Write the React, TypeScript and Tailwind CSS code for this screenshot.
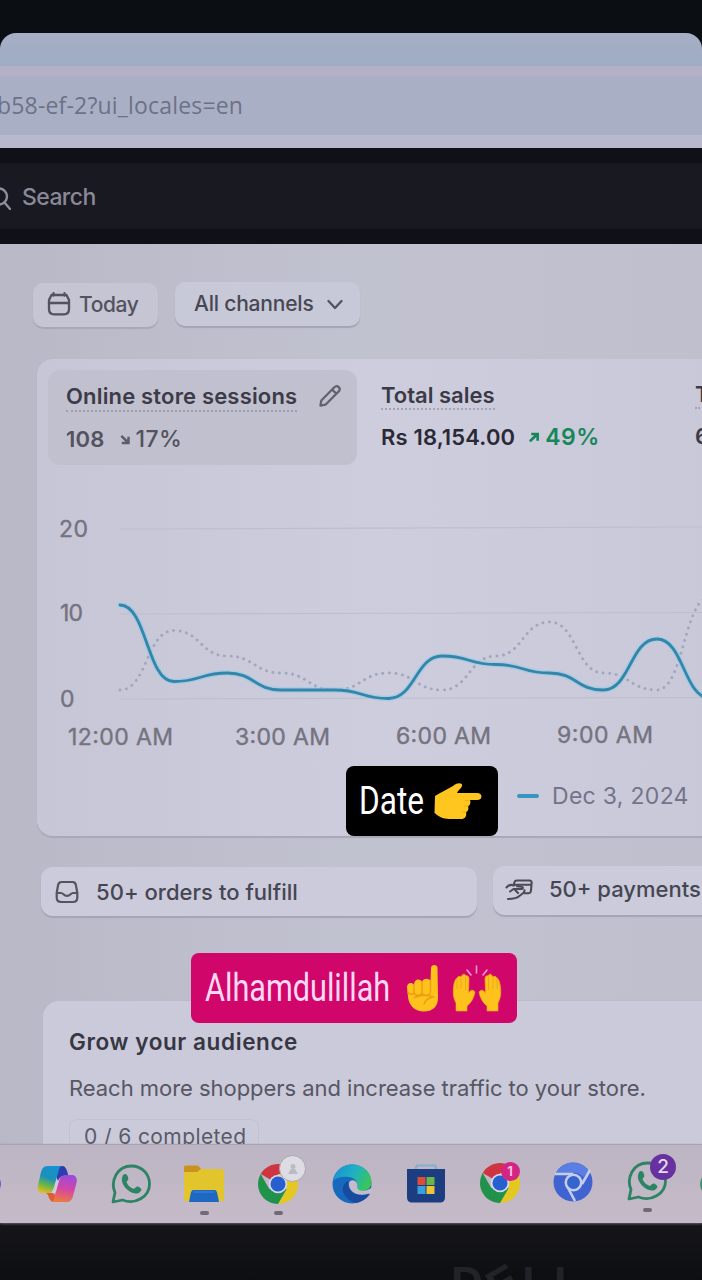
import React from "react";

const STEP = 53.7;
const solid = [11, 2, 3, 1, 1, 0, 5, 4, 3, 1, 7, 0];
const dotted = [1, 8, 5, 3, 1, 3, 1, 5, 9, 3, 1, 12];

function curve(values: number[]) {
  const pts = values.map((v, i) => [120 + i * STEP, 208.5 - v * 8.5]);
  return pts.reduce((d, [x, y], i) => {
    if (i === 0) return `M${x} ${y}`;
    const [px, py] = pts[i - 1];
    const mid = (px + x) / 2;
    return `${d} C${mid} ${py} ${mid} ${y} ${x} ${y}`;
  }, "");
}

function Chart() {
  return (
    <svg className="absolute -left-[37px] top-[131px] h-[270px] w-[702px] font-['Inter',sans-serif]" viewBox="0 0 702 270">
      <g stroke="#bfbecd" strokeWidth="1.200">
        <path d="M119 39L702 37" />
        <path d="M119 124L702 122.500" />
        <path d="M119 209L702 207.500" />
      </g>
      <path d={curve(dotted)} fill="none" stroke="#a0a8c0" strokeWidth="2.900" strokeLinecap="round" strokeDasharray="0.1 6.4" />
      <path d={curve(solid)} fill="none" stroke="#8fcbe6" strokeWidth="5.500" strokeLinecap="round" opacity=".6" />
      <path d={curve(solid)} fill="none" stroke="#3485aa" strokeWidth="2.800" strokeLinecap="round" />
      <g fill="#74737f" stroke="#74737f" strokeWidth=".4" fontSize="23">
        <text x="59" y="46.500" textLength="29">20</text>
        <text x="60" y="130.500" textLength="23">10</text>
        <text x="60" y="216.500">0</text>
        <text x="68" y="254.500" textLength="105">12:00 AM</text>
        <text x="235" y="254.500" textLength="95">3:00 AM</text>
        <text x="396" y="253.500" textLength="95">6:00 AM</text>
        <text x="557" y="252.500" textLength="96">9:00 AM</text>
      </g>
    </svg>
  );
}

function CalendarIcon() {
  return (
    <svg className="-mt-[2px] h-6 w-6" viewBox="0 0 24 24" fill="none" stroke="#53525e" strokeWidth="2.300" strokeLinecap="round">
      <path d="M4.500 3H19.500L22 8V17C22 20.500 20 22.300 17 22.300H7C4 22.300 2 20.500 2 17V8Z" strokeLinejoin="round" />
      <path d="M2 11H22M6.500 1.200V3.500M17.500 1.200V3.500" />
    </svg>
  );
}

function PencilIcon() {
  return (
    <svg className="h-6 w-6" viewBox="0 0 24 24" fill="none" stroke="#62626e" strokeWidth="2.200" strokeLinejoin="round">
      <path d="M2.400 21.600L3.300 16.500L16.300 3.300C17.700 1.900 19.500 1.900 20.700 3.100C22 4.400 22 6.100 20.700 7.400L7.500 20.700Z" />
      <path d="M14.200 5.600L18.400 9.800" />
    </svg>
  );
}

function TrendIcon({ up }: { up?: boolean }) {
  return up ? (
    <svg className="h-[11px] w-3" viewBox="0 0 12 12" fill="none" stroke="#16875a" strokeWidth="2.900">
      <path d="M1.500 10L9 3M3 2.200H10V9.500" />
    </svg>
  ) : (
    <svg className="h-[11px] w-3" viewBox="0 0 12 12" fill="none" stroke="#5d5c69" strokeWidth="2.700">
      <path d="M2 2L9 9M2.500 9.800H9.800V3" />
    </svg>
  );
}

function InboxIcon() {
  return (
    <svg className="h-6 w-6" viewBox="0 0 24 24" fill="none" stroke="#55555f" strokeWidth="2.200" strokeLinejoin="round">
      <path d="M6.500 2H17.500C20 2 20.700 3 21 5.500L22.300 13V17.500C22.300 20.500 20.800 22 18 22H6C3.200 22 1.700 20.500 1.700 17.500V13L3 5.500C3.400 3 4.200 2 6.500 2Z" />
      <path d="M1.800 13H6C8.500 13 8.500 15.800 12 15.800C15.500 15.800 15.500 13 18 13H22.200" />
    </svg>
  );
}

function PaymentIcon() {
  return (
    <svg className="h-[22px] w-7" viewBox="0 0 28 22" fill="none" stroke="#4b4b57" strokeWidth="2.100" strokeLinecap="round" strokeLinejoin="round">
      <path d="M9 4.500L9.500 3C9.800 1.800 10.500 1.500 12 1.500H24.500C26 1.500 26.700 2.400 26.600 4L26 11.500C25.800 13.300 25 14.300 23.300 14.300H19.500" />
      <path d="M9.500 5.800H26" />
      <path d="M1.500 8.500C4 5.500 6 5 9 6.500M5 12.500L8.500 10H16.500C18.500 10 18.500 8 16.500 7.800L12 7.200" />
      <path d="M19.500 11.300C20 13.500 17.500 14.500 15 16.500C12 19.500 9 20 3 20M9.500 10.300L13 14" />
    </svg>
  );
}

function PointRight() {
  return (
    <svg className="h-[38px] w-[49px]" viewBox="0 0 49 38">
      <path d="M2 14C8 10 15 7 20 4C25 0 30 1 29 4C28 7 25 8 24 11H44C50 11 50 18 44 18H37C38 20 37 24 35 24C36 27 35 30 33 30C34 34 32 37 28 37H16C10 37 5 34 1.500 31Z" fill="#fec61e" />
      <path d="M36 18.500H32M35 24H31M33 30H29" stroke="#eeae1d" strokeWidth="1" fill="none" strokeLinecap="round" />
    </svg>
  );
}

function PointUp() {
  return (
    <svg className="h-12 w-[34px]" viewBox="0 0 34 48">
      <path d="M25 4C25 0 31.500 0 31.500 4L32 34C32 43 26 47.500 18 47.500C8 47.500 3 41 2 33L1 23C1 19 6 17.500 8 21C8 15 14 14 16 18C17 14 23 14 24.500 17Z" fill="#fec21d" />
      <path d="M8 21V28C8 31 3 31 2 28M16 18V28C16 32 9 32 8 29M24.500 17V28C24 32 17 32 16 29M8 34C14 30 23 31 27 33C22 34 19 37 18 40" fill="none" stroke="#ed9d14" strokeWidth="1.400" strokeLinecap="round" />
    </svg>
  );
}

function RaisedHands() {
  const hand = "M4 47L4 39C1 34 1 28 1.500 23C2 19 3 15 5 14C6 12 8 12 9 13C10 10 13 9 14 12C16 11 17 13 17 15L16.500 29C18 26 21 25 23 28C22 34 19 39 15 42V47Z";
  return (
    <svg className="h-[49px] w-[50px]" viewBox="0 0 50 49">
      <g fill="#fec21d" stroke="#f3a818" strokeWidth=".6">
        <path d={hand} />
        <path d={hand} transform="translate(50 0) scale(-1 1)" />
      </g>
      <path d="M5 15V25M9 14V25M13.500 13V26M45 15V25M41 14V25M36.500 13V26" fill="none" stroke="#f0a31a" strokeWidth=".9" />
      <path d="M15 6L19 11M24.500 2V9M35 6L31 11" stroke="#ef9bd2" strokeWidth="1.600" strokeLinecap="round" />
    </svg>
  );
}

function Copilot() {
  return (
    <svg className="h-10 w-10" viewBox="0 0 40 40">
      <defs>
        <linearGradient id="cpA" x1=".6" y1="0" x2=".3" y2="1">
          <stop offset="0" stopColor="#1590d2" />
          <stop offset=".45" stopColor="#1d91b8" />
          <stop offset=".72" stopColor="#69b548" />
          <stop offset="1" stopColor="#e0bc22" />
        </linearGradient>
        <linearGradient id="cpB" x1=".6" y1="0" x2=".4" y2="1">
          <stop offset="0" stopColor="#9a4bd8" />
          <stop offset=".5" stopColor="#d345a8" />
          <stop offset="1" stopColor="#ef7a3c" />
        </linearGradient>
      </defs>
      <path d="M15 5H26L24 26L15 30Z" fill="#d4cae0" />
      <path d="M19 2H25C28 2 29 4 30 7L31.500 12H27C24 12 22 14 21 17L19 12Z" fill="#2d3db0" />
      <path d="M10 2H25C22 3 22 6 21 9L17 23C16 27 14 29 11 29H6C1 29 0 26 1 21L4 8C5 4 7 2 10 2Z" fill="url(#cpA)" />
      <path d="M9 29H16L20 33L16 38C13 37 12 34 11 31Z" fill="#dd5f31" />
      <path d="M28 11H34C39 11 40.500 14 39.500 19L36 32C35 36 33 38 29 38H14C17 37 17 34 18 31L22 17C23 13 25 11 28 11Z" fill="url(#cpB)" />
    </svg>
  );
}

function WhatsApp() {
  return (
    <svg className="h-10 w-10" viewBox="0 0 40 40">
      <path d="M2 38L4 28.500C-1 17 6 2 20.500 2C31 2 38.500 10 38.500 20C38.500 33 24 41 11.500 36Z" fill="none" stroke="#2c8464" strokeWidth="2.800" strokeLinejoin="round" />
      <path d="M12 11C14 9 16 10 17 13C18 16 16 17 15.500 18C17 22 20 24 23 25C25 23 26 22 28 23C31 25 31 26 29 28C26 31 21 29 18 27C14 24 10 19 11 14Z" fill="#2c8464" />
    </svg>
  );
}

function Folder() {
  return (
    <svg className="h-10 w-[42px]" viewBox="0 0 42 40">
      <path d="M1 3C1 2 2 1.500 3 1.500H15L18 5V11H1Z" fill="#c9921f" />
      <path d="M1 8H14L18 5H38C40 5 41 6 41 8V37H1Z" fill="#e2c42c" />
      <path d="M11 26H31C34 26 34 28 35 33L36 38H6L7 33C8 28 8 26 11 26Z" fill="#1f67c0" />
      <path d="M11 27H31V29H11Z" fill="#2b7ad0" />
    </svg>
  );
}

function Chrome() {
  return (
    <svg className="h-10 w-10" viewBox="0 0 40 40">
      <path d="M20 20L2.700 10A20 20 0 0 1 37.300 10Z" fill="#ce3540" />
      <path d="M37.300 10H20V20L28.700 25L20 40A20 20 0 0 0 37.300 10Z" fill="#e5c722" />
      <path d="M2.700 10L11.300 25L20 20L28.700 25L20 40A20 20 0 0 1 2.700 10Z" fill="#20924b" />
      <circle cx="20" cy="20" r="9.300" fill="#d4d5e8" />
      <circle cx="20" cy="20" r="7.500" fill="#275fd0" />
    </svg>
  );
}

function Edge() {
  return (
    <svg className="h-10 w-10" viewBox="0 0 40 40">
      <defs>
        <linearGradient id="edA" x1="0" y1=".2" x2="1" y2=".6">
          <stop offset="0" stopColor="#188fd2" />
          <stop offset=".5" stopColor="#1eb1c4" />
          <stop offset="1" stopColor="#3cc653" />
        </linearGradient>
      </defs>
      <circle cx="20" cy="20" r="19.500" fill="#1769bd" />
      <path d="M.8 17C3 6 11 .5 20 .5C31 .5 39.500 8 39.500 18C39.500 24 34 27.500 29 27.500C26 27.500 24 26 25 24C27 20 24 14 17 13C10 12 4 14 .8 17Z" fill="url(#edA)" />
      <path d="M16 17C7 22 10 35 24 39C31 38 36 33 38 30C26 34 15 29 16 17Z" fill="#184aa0" />
      <path d="M17 19C18 14 26 16 25.500 22C24 26 30 29.500 39.500 24L40 28C30 34 16 30 17 19Z" fill="#c4bccb" />
    </svg>
  );
}

function Store() {
  return (
    <svg className="h-10 w-10" viewBox="0 0 40 40">
      <path d="M9 7L11 2.500H29L31 7" fill="none" stroke="#84aed0" strokeWidth="2.200" />
      <path d="M1 6H39V34C39 38 37 39.500 34 39.500H6C3 39.500 1 38 1 34Z" fill="#1c3e80" />
      <path d="M11.500 14H19.500V22H11.500Z" fill="#dc4c38" />
      <path d="M20.500 14H28.500V22H20.500Z" fill="#6bb646" />
      <path d="M11.500 23H19.500V31H11.500Z" fill="#36a0df" />
      <path d="M20.500 23H28.500V31H20.500Z" fill="#efc534" />
    </svg>
  );
}

function BlueChromium() {
  return (
    <svg className="h-10 w-10" viewBox="0 0 40 40">
      <circle cx="20" cy="20" r="19.500" fill="#4063d2" />
      <path d="M3 11A19.500 19.500 0 0 1 36 9L30 15C27 11 23 10.500 20 11Z" fill="#5a7ee2" />
      <path d="M2 12H20M29 22L37 8M14 24L22 39" stroke="#c6cdeb" strokeWidth="2.600" />
      <circle cx="20.500" cy="20.500" r="9" fill="#c6cdeb" />
      <circle cx="20.500" cy="20.500" r="6.500" fill="#3564cd" />
    </svg>
  );
}

function TaskItem({ children, running, badge }: { children: React.ReactNode; running?: boolean; badge?: React.ReactNode }) {
  return (
    <div className="relative flex w-[73.8px] shrink-0 flex-col items-center">
      {children}
      {running && <span className="mt-[7px] h-1 w-[9px] rounded-full bg-[#706977]" />}
      {badge}
    </div>
  );
}

export default function App() {
  return (
    <div className="h-[1280px] w-[702px] overflow-hidden bg-[#0b0f14] pt-[33px] font-['Inter','Liberation_Sans',sans-serif]">
      <div className="flex h-[1247px] flex-col overflow-hidden rounded-t-[16px] bg-[#101015]">
        <div className="h-[33px] shrink-0 bg-linear-to-b from-[#a6aec4] to-[#9dadc5]" />
        <div className="flex h-[82px] shrink-0 items-center border-t-10 border-b-13 border-t-[#b4b1c6] border-b-[#b9b8cc] bg-[#a9b0c6] shadow-[0_1px_1px_#77778a]">
          <span className="relative -left-[3px] font-['Open_Sans',sans-serif] text-[23px] tracking-[0.18px] whitespace-nowrap text-[#6c7286]">b58-ef-2?ui_locales=en</span>
        </div>
        <div className="flex h-[96px] shrink-0 items-center gap-[11px] border-y-15 border-[#101018] bg-[#191a21] pt-[3px]">
          <svg className="-ml-3 h-6 w-[23px] shrink-0" viewBox="0 0 23 24" fill="none" stroke="#8e8d9b" strokeWidth="2.400" strokeLinecap="round">
            <circle cx="11" cy="10.500" r="8" />
            <path d="M16.500 16.500L22 23" />
          </svg>
          <span className="text-[23px] font-medium tracking-[-0.6px] text-[#8b8997]">Search</span>
        </div>

        <main className="h-[900px] shrink-0 overflow-hidden bg-linear-to-r from-[#b9b8c7] via-[#c1c2d0] to-[#c0bfce]">
          <div className="flex gap-[17px] pt-[38px] pl-[33px]">
            <div className="mt-px flex h-11 w-[125px] items-center gap-2 rounded-[10px] bg-[#c5c5d4] pl-[14px] shadow-[0_2px_1px_#a9a8b6]">
              <CalendarIcon />
              <span className="text-[21px] font-medium tracking-[-0.4px] text-[#53525e]">Today</span>
            </div>
            <div className="flex h-11 w-[185px] items-center gap-[13px] rounded-[10px] bg-[#c8c9d8] pl-[19px] shadow-[0_2px_1px_#a5a4b2]">
              <span className="text-[21px] font-medium tracking-[-0.2px] whitespace-nowrap text-[#484853]">All channels</span>
              <svg className="h-4 w-4" viewBox="0 0 16 16" fill="none" stroke="#53535e" strokeWidth="2.300" strokeLinecap="round" strokeLinejoin="round">
                <path d="M1.500 5L8 12L14.500 5" />
              </svg>
            </div>
          </div>

          <section className="relative mt-8 ml-[37px] h-[477px] w-[700px] rounded-[16px] bg-linear-to-r from-[#c7c6d6] via-[#cdcddd] to-[#c9c8d8] shadow-[0_2px_1px_#a9a8b7]">
            <div className="flex pt-[11px] pl-[11px]">
              <div className="h-[95px] w-[309px] shrink-0 rounded-[12px] bg-[#c0c0ce] px-[18px] pt-[12px]">
                <div className="flex items-start justify-between">
                  <h2 className="h-[30px] border-b-2 border-dotted border-[#a09fad] text-[22px] leading-[28px] font-semibold tracking-[0.17px] whitespace-nowrap text-[#3c3b48]">Online store sessions</h2>
                  <div className="mt-[2px] -mr-[3px]"><PencilIcon /></div>
                </div>
                <div className="mt-[13px] flex items-center text-[22px] leading-[28px] font-medium text-[#53525e]">
                  <span className="mr-[14px] font-semibold tracking-[0.2px]">108</span>
                  <TrendIcon />
                  <span className="ml-[5px] text-[23px] tracking-[0.4px]">17%</span>
                </div>
              </div>
              <div className="w-[314px] shrink-0 pt-[11px] pl-6">
                <h2 className="h-[29px] w-fit border-b-2 border-dotted border-[#a5a4b4] text-[22px] leading-[28px] font-semibold text-[#3b3a47]">Total sales</h2>
                <div className="mt-[13px] flex items-center text-[22px] leading-[28px] font-semibold whitespace-nowrap">
                  <span className="mr-[13px] tracking-[0.15px] text-[#2a2936]">Rs 18,154.00</span>
                  <TrendIcon up />
                  <span className="ml-[5px] text-[23px] tracking-[0.5px] text-[#16875a]">49%</span>
                </div>
              </div>
              <div className="pt-[10px] pl-6">
                <div className="h-[29px] w-10 border-b-2 border-dotted border-[#a5a4b4] text-[22px] leading-[28px] font-semibold text-[#3b3a47]">T</div>
                <div className="mt-[13px] text-[22px] leading-[28px] font-semibold text-[#3b3a47]">6</div>
              </div>
            </div>
            <Chart />
            <div className="absolute top-[407px] left-[309px] flex h-[70px] w-[152px] items-center rounded-[8px] bg-black pl-[13px]">
              <span className="inline-block w-[74px] origin-left scale-x-[.8] font-['Roboto',sans-serif] text-[39.5px] leading-none font-[450] text-white">Date</span>
              <PointRight />
            </div>
            <div className="absolute top-[420px] left-[480px] flex items-center gap-[13px]">
              <span className="h-1 w-[22px] rounded-full bg-[#3b94bd]" />
              <span className="text-[23px] tracking-[0.3px] whitespace-nowrap text-[#74738a]">Dec 3, 2024</span>
            </div>
          </section>

          <div className="mt-[30px] ml-[41px] flex w-[800px] gap-4">
            <div className="mt-px flex h-[49px] w-[436px] items-center gap-[17px] rounded-[12px] bg-[#cbcbdb] pt-px pl-[14px] shadow-[0_2px_1px_#a5a5b4]">
              <InboxIcon />
              <span className="text-[22px] font-medium tracking-[0.04px] whitespace-nowrap text-[#464652]">50+ orders to fulfill</span>
            </div>
            <div className="flex h-[49px] w-[300px] items-center gap-4 rounded-[12px] bg-[#cbcbdb] pb-[2px] pl-3 shadow-[0_2px_1px_#a5a5b4]">
              <PaymentIcon />
              <span className="text-[22px] font-medium whitespace-nowrap text-[#464652]">50+ payments</span>
            </div>
          </div>

          <section className="relative mt-[85px] ml-[43px] h-[160px] w-[700px] rounded-t-[16px] bg-[#cacada] pt-[25px] pl-[26px] shadow-[0_-1px_1px_#babac8]">
            <h2 className="text-[22.5px] leading-[32px] font-semibold tracking-[0.6px] text-[#373643]">Grow your audience</h2>
            <p className="mt-[15px] text-[22px] leading-[30px] tracking-[-0.04px] whitespace-nowrap text-[#575663]">Reach more shoppers and increase traffic to your store.</p>
            <div className="mt-[16px] h-10 w-[190px] rounded-[8px] border border-[#c2c2d0] pt-[3px] pl-[14px] text-[21px] leading-[28px] tracking-[0.4px] text-[#5b5a67]">0 / 6 completed</div>
            <div className="absolute -top-[48px] left-[148px] flex h-[70px] w-[326px] items-center rounded-[8px] bg-[#d1066b] pl-[14px]">
              <span className="inline-block w-[201px] origin-left scale-x-[.775] font-['Roboto',sans-serif] text-[39.5px] leading-none font-[450] text-[#ffd9f3]">Alhamdulillah</span>
              <PointUp />
              <span className="ml-[12px] flex"><RaisedHands /></span>
            </div>
          </section>
        </main>

        <footer className="relative flex h-[79px] shrink-0 border-t border-[#aaa3b2] bg-linear-to-b from-[#bdb5c4] to-[#c5bac8] pt-[19px] shadow-[0_1px_2px_#606068]">
          <span className="mt-[10px] h-5 w-5 shrink-0 -translate-x-[19px] rounded-full bg-[#6261bd]" />
          <TaskItem><Copilot /></TaskItem>
          <TaskItem><WhatsApp /></TaskItem>
          <TaskItem running><Folder /></TaskItem>
          <TaskItem running badge={<span className="absolute -top-[9px] right-[9px] flex h-[27px] w-[27px] items-center justify-center rounded-full border border-[#aaa8af] bg-[#dddce4]"><svg className="h-3 w-3" viewBox="0 0 12 12" fill="#bbbac4"><circle cx="6" cy="3.500" r="2.500" /><path d="M1 11L4 6H8L11 11Z" /></svg></span>}><Chrome /></TaskItem>
          <TaskItem><Edge /></TaskItem>
          <div className="-mt-px flex"><TaskItem><Store /></TaskItem></div>
          <div className="-mt-px flex">
            <TaskItem badge={<span className="absolute -top-px right-[17px] flex h-[19px] w-[19px] items-center justify-center rounded-full bg-[#d32583] text-[13px] font-bold text-[#f5c1dd]">1</span>}><Chrome /></TaskItem>
          </div>
          <div className="-mt-[2px] flex"><TaskItem><BlueChromium /></TaskItem></div>
          <div className="-mt-[3px] flex">
            <TaskItem running badge={<span className="absolute -top-[7px] right-[8px] flex h-[26px] w-[26px] items-center justify-center rounded-full bg-[#6732a0] text-[19px] font-medium text-[#e6d9f4]">2</span>}><WhatsApp /></TaskItem>
          </div>
          <span className="mt-2 ml-[16px] h-6 w-6 shrink-0 rounded-full border-3 border-[#399372]" />
        </footer>
        <div className="flex h-[57px] shrink-0 items-start gap-[5px] overflow-hidden bg-linear-to-b from-[#15151a] to-[#0d0e12] pt-[33px] pl-[451px] font-['Liberation_Sans',sans-serif] text-[44px] leading-[54px] font-bold text-[#222328]">
          <span>D</span><span className="inline-block -rotate-30">E</span><span className="tracking-[5px]">LL</span>
        </div>
      </div>
    </div>
  );
}
